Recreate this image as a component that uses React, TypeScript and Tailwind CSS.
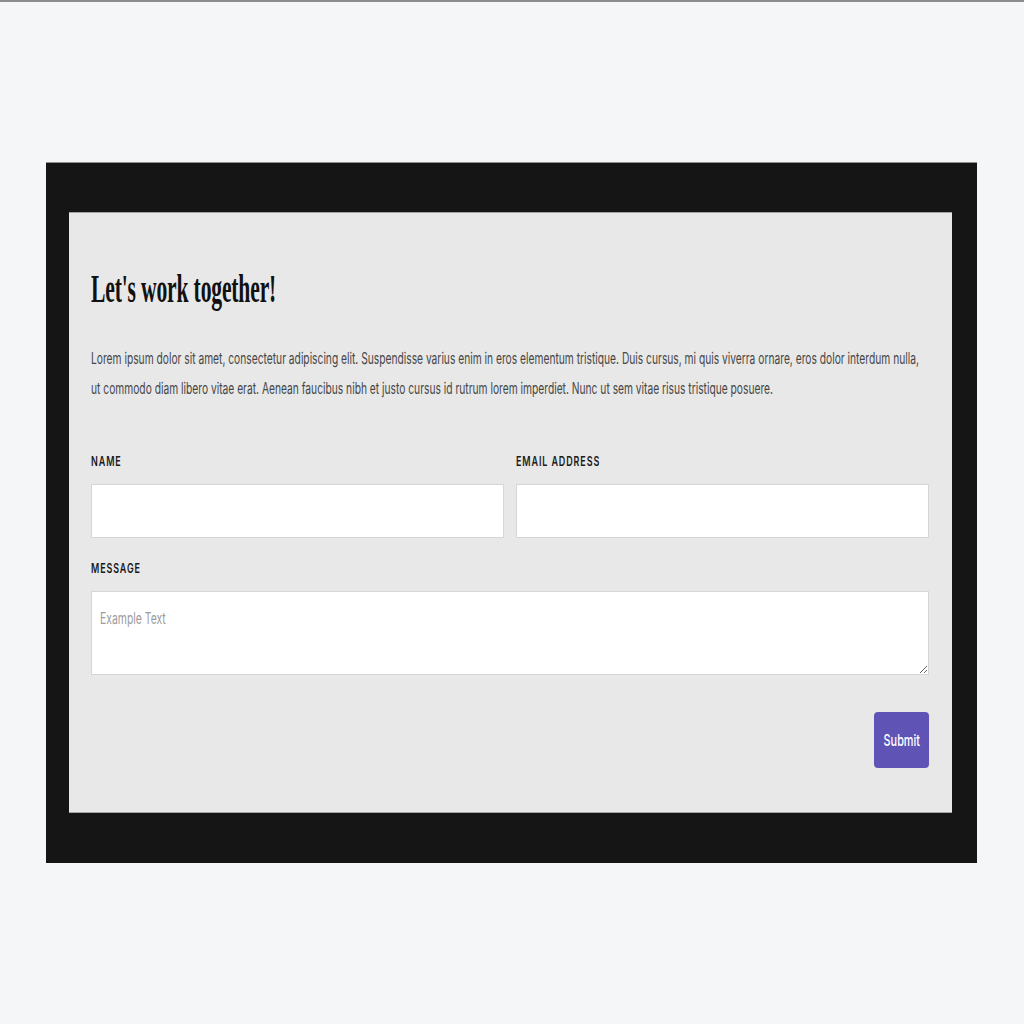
export default function App() {
  return (
    <div className="min-h-screen bg-[#f5f6f8] border-t-2 border-[#8c8c8c] pt-[160px] pl-[46px]">
      <div className="w-[931px] bg-[#151515] border-t border-[#8f8f8f] pt-[49px] pb-[50px] pl-[23px] pr-[25px]">
        <div className="bg-[#e8e8e8] border-y border-[#a3a3a3] pl-[22px] pr-[23px] pt-[56px] pb-[44px]">
          <h1 className="font-['Liberation_Serif',serif] font-bold text-[40px] leading-[40px] text-[#111]">
            <span className="inline-block origin-left scale-x-[0.54] tracking-[-0.3px]">Let's work together!</span>
          </h1>

          <p className="mt-[34px] font-['Inter',sans-serif] text-[16px] leading-[30px] text-[#474747] whitespace-nowrap origin-left scale-x-[0.64]">
            Lorem ipsum dolor sit amet, consectetur adipiscing elit. Suspendisse varius enim in eros elementum tristique. Duis cursus, mi quis viverra ornare, eros dolor interdum nulla,
            <br />
            ut commodo diam libero vitae erat. Aenean faucibus nibh et justo cursus id rutrum lorem imperdiet. Nunc ut sem vitae risus tristique posuere.
          </p>

          <form className="mt-[50px] font-['Inter',sans-serif]" onSubmit={(e) => e.preventDefault()}>
            <div className="grid grid-cols-2 gap-x-3">
              <label className="flex flex-col">
                <span className="text-[13px] leading-4 font-semibold tracking-[0.1em] text-[#1a1a1a] mb-[15px]">
                  <span className="inline-block origin-left scale-x-[0.69]">NAME</span>
                </span>
                <input type="text" className="h-[54px] bg-white border border-[#d6d6d6] px-2 outline-none" />
              </label>
              <label className="flex flex-col">
                <span className="text-[13px] leading-4 font-semibold tracking-[0.1em] text-[#1a1a1a] mb-[15px]">
                  <span className="inline-block origin-left scale-x-[0.69]">EMAIL ADDRESS</span>
                </span>
                <input type="email" className="h-[54px] bg-white border border-[#d6d6d6] px-2 outline-none" />
              </label>
            </div>

            <label className="flex flex-col mt-[22px]">
              <span className="text-[13px] leading-4 font-semibold tracking-[0.1em] text-[#1a1a1a] mb-[15px]">
                <span className="inline-block origin-left scale-x-[0.69]">MESSAGE</span>
              </span>
              <div className="relative">
                <textarea
                  aria-label="Example Text"
                  className="block w-full h-[84px] bg-white border border-[#d6d6d6] pl-[9px] pt-[16px] text-[16px] outline-none"
                />
                {/* condensed placeholder overlay */}
                <span className="pointer-events-none absolute left-[9px] top-[17px] text-[16px] leading-5 text-[#9c9c9c] origin-left scale-x-[0.65]">
                  Example Text
                </span>
              </div>
            </label>

            <div className="flex justify-end mt-[37px]">
              <button type="submit" className="w-[55px] h-[56px] rounded-[4px] bg-[#5f54b6] text-white text-[16px] font-medium flex items-center justify-center">
                <span className="inline-block scale-x-[0.68]">Submit</span>
              </button>
            </div>
          </form>
        </div>
      </div>
    </div>
  );
}
